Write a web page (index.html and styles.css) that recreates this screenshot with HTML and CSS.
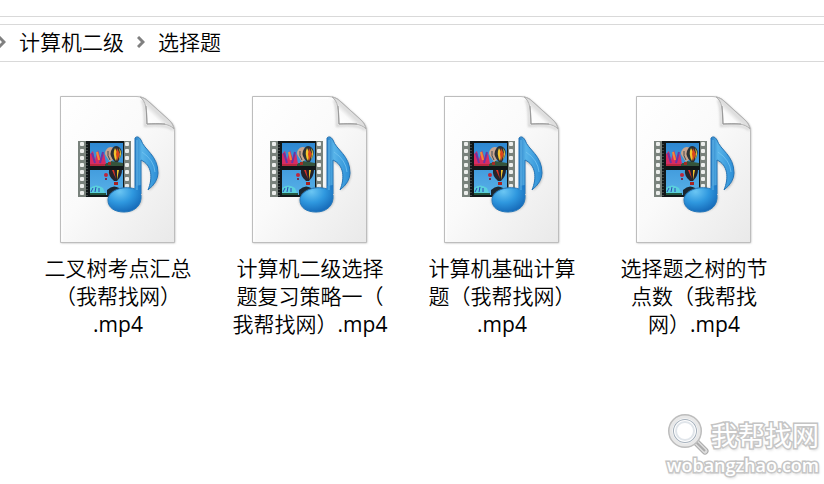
FILE: index.html
```html
<!DOCTYPE html>
<html lang="zh-CN">
<head>
<meta charset="utf-8">
<title>选择题</title>
<link rel="stylesheet" href="styles.css">
</head>
<body>
<svg class="defs" aria-hidden="true">
  <defs>
    <linearGradient id="paper" x1="0" y1="0" x2="1" y2="1">
      <stop offset="0" stop-color="#fff"/><stop offset=".45" stop-color="#fafafa"/><stop offset="1" stop-color="#e9e9e9"/>
    </linearGradient>
    <linearGradient id="curl" x1="0" y1="1" x2=".5" y2=".5">
      <stop offset="0" stop-color="#c4c4c4"/><stop offset=".4" stop-color="#fff"/><stop offset=".8" stop-color="#fafafa"/><stop offset="1" stop-color="#dedede"/>
    </linearGradient>
    <linearGradient id="sky" x1="0" y1="0" x2="0" y2="1">
      <stop offset="0" stop-color="#2d87d2"/><stop offset="1" stop-color="#58b1e8"/>
    </linearGradient>
    <linearGradient id="blue" x1="0" y1="0" x2="1" y2="0">
      <stop offset="0" stop-color="#2a7fc6"/><stop offset=".3" stop-color="#58b4e9"/><stop offset="1" stop-color="#2c8ed6"/>
    </linearGradient>
    <radialGradient id="head" cx=".35" cy=".25" r=".8">
      <stop offset="0" stop-color="#6bc6f3"/><stop offset=".5" stop-color="#2f98df"/><stop offset="1" stop-color="#1467b6"/>
    </radialGradient>
    <pattern id="holes" width="8" height="7" patternUnits="userSpaceOnUse" patternTransform="translate(20 47)">
      <rect width="8" height="7" fill="#79827c"/><rect x="2" y="1" width="4" height="4" rx="1" fill="#eceeec"/>
    </pattern>
    <filter id="soft" x="-20%" y="-20%" width="140%" height="140%"><feGaussianBlur stdDeviation="1"/></filter>
    <symbol id="video" viewBox="0 0 120 152">
      <path d="M3 3H82Q87 4 91 8L113 28Q117 32 117 38V149H3Z" fill="#777" opacity=".6" filter="url(#soft)"/>
      <path d="M2.500 2.500H79C84 3 87 4 90 7L112 27C115 30 116.500 33 116.500 38V148.500H2.500Z" fill="url(#paper)" stroke="#bdbdbd"/>
      <path d="M4 147V4H78" fill="none" stroke="#fff"/>
      <path d="M84 6C87 11 87 20 87 32C98 31 110 31 115 36" fill="none" stroke="#aaa" stroke-width="2" opacity=".5" filter="url(#soft)"/>
      <path d="M82 3C88 7 89 16 89 30C100 29 111 29 116 35C115 31 114 29 111 26L91 8C88 5 86 4 82 3Z" fill="url(#curl)" stroke="#b0b0b0"/>
      <path d="M88 12L89 30L107 30" fill="none" stroke="#999"/>
      <rect x="20" y="47" width="52" height="56" fill="#79827c"/>
      <rect x="20" y="47" width="8" height="56" fill="url(#holes)"/>
      <rect x="20" y="47" width="8" height="56" fill="url(#holes)" transform="translate(45 0)"/>
      <path d="M28 47H66V103H28Z" fill="#111719"/>
      <path d="M29 50V102" stroke="#737b77" stroke-dasharray="1 2"/>
      <path d="M32 49H65V72H32ZM32 76H65V101H32Z" fill="url(#sky)"/>
      <path d="M32 69Q37 65 43 68T53 67L65 69V72H32Z" fill="#35543c"/>
      <path d="M32 60L35 57L37 66L40 56L43 66L46 59L48 70H32Z" fill="#d92b62"/>
      <path d="M34 59L37 69M45 58L42 69" stroke="#6b35a4" stroke-width="2"/>
      <path d="M39 58L41 66" stroke="#f28b36" stroke-width="2"/>
      <path d="M32 70H47V72H32Z" fill="#b8293f"/>
      <path d="M48 56Q51 51 56 54V65L52 68L48 62Q46 59 48 56Z" fill="#c9a58f"/>
      <path d="M50 57Q49 62 52 66" stroke="#3e4a52" fill="none"/>
      <path d="M53 57Q56 50 61 53Q65 56 63 62L60 68H57Q51 62 53 57Z" fill="#2b3136"/>
      <path d="M57 54Q54 60 58 67L60 60Z" fill="#f4c52d"/>
      <path d="M59 54L62 60L59 67L58 60Z" fill="#d9451c"/>
      <path d="M61 54Q65 59 61 66L62 59Z" fill="#d8c43b"/>
      <path d="M50 68H53V71H50Z" fill="#a32c25"/>
      <circle cx="48" cy="81" r="2" fill="#bd263b"/>
      <path d="M47 84H49V86H47Z" fill="#6e2f54"/>
      <path d="M51 76H64Q64 82 59 87H56Q50 82 51 76Z" fill="#24232c"/>
      <path d="M54 76H56L58 85Z" fill="#db3327"/><path d="M59 76H61L59 86Z" fill="#ebc12c"/>
      <path d="M56 88H60V91H56Z" fill="#a9221f"/>
      <path d="M32 94Q38 89 45 94L47 99H32Z" fill="#5ad0dd"/>
      <path d="M33 98L35 94M37 98L38 93M41 98L41 94" stroke="#2c49b6" fill="none"/>
      <path d="M32 99H48V101H32Z" fill="#23563f"/>
      <path d="M49 101V96Q55 90 61 94L65 101Z" fill="#192630"/>
      <path d="M78 43Q82 42 84 48C88 57 101 63 101 80Q101 89 91 97C96 85 94 72 83 68L84 101C86 111 78 118 67 118C56 118 49 113 49 106C50 96 66 91 77 95Z" fill="#555" opacity=".35" filter="url(#soft)"/>
      <path d="M77 44Q80 41 83 46C86 56 100 61 100 79Q100 88 90 96C95 84 94 71 83 66L83 100L77 103Z" fill="url(#blue)" stroke="#2475b7"/>
      <path d="M77 92V95C64 91 50 97 50 106C50 114 57 118 66 118C77 118 84 111 83 101V91Z" fill="url(#head)"/>
      <path d="M77 95C64 91 50 97 50 106C50 114 57 118 66 118C77 118 84 111 83 101" fill="none" stroke="#2378bc"/>
      <path d="M79 46V96M84 58Q96 66 97 78" fill="none" stroke="#79c8f2" opacity=".7"/>
    </symbol>
  </defs>
</svg>
<header class="topbar"></header>
<nav class="crumbs" aria-label="路径">
  <svg class="chevron" viewBox="0 0 8 12" aria-hidden="true"><path d="M1 1L6 6L1 11"/></svg>
  <a href="#">计算机二级</a>
  <svg class="chevron" viewBox="0 0 8 12" aria-hidden="true"><path d="M1 1L6 6L1 11"/></svg>
  <a href="#">选择题</a>
</nav>
<main class="files">
  <figure class="file"><svg class="icon" aria-hidden="true"><use href="#video"/></svg><figcaption>二叉树考点汇总<br>（我帮找网）<br><span class="ext">.mp4</span></figcaption></figure>
  <figure class="file"><svg class="icon" aria-hidden="true"><use href="#video"/></svg><figcaption>计算机二级选择<br>题复习策略一（<br>我帮找网）<span class="ext">.mp4</span></figcaption></figure>
  <figure class="file"><svg class="icon" aria-hidden="true"><use href="#video"/></svg><figcaption>计算机基础计算<br>题（我帮找网）<br><span class="ext">.mp4</span></figcaption></figure>
  <figure class="file"><svg class="icon" aria-hidden="true"><use href="#video"/></svg><figcaption>选择题之树的节<br>点数（我帮找<br>网）<span class="ext">.mp4</span></figcaption></figure>
</main>
<aside class="watermark">
  <div class="brand">
    <svg class="lens" viewBox="0 0 42 42" aria-hidden="true">
      <path d="M29 29L38 38" stroke="#aaa" stroke-width="7" stroke-linecap="round"/>
      <path d="M29 29L38 38" stroke="#ddd" stroke-width="5" stroke-linecap="round"/>
      <path d="M29 29L38 38" stroke="#aaa" stroke-width="2"/>
      <circle cx="18" cy="18" r="15" fill="#fff" stroke="#bdbdbd" stroke-width="4"/>
      <circle cx="18" cy="18" r="14" fill="none" stroke="#e8e8e8" stroke-width="3"/>
      <circle cx="18" cy="18" r="11" fill="#fff" stroke="#a5b0bb" stroke-width="2"/>
      <circle cx="18" cy="18" r="9" fill="none" stroke="#e0e5ea" stroke-width="2"/>
    </svg>
    <span class="name">我帮找网</span>
  </div>
  <div class="site">wobangzhao.com</div>
</aside>
</body>
</html>
```
FILE: styles.css
```css
* {
  box-sizing: border-box;
}

body {
  position: relative;
  min-height: 100vh;
  margin: 0;
  background: #fff;
  color: #000;
  font-family: "Open Sans", "Noto Sans CJK SC", sans-serif;
  font-size: 21px;
  line-height: 28px;
}

.defs {
  position: absolute;
  width: 0;
  height: 0;
}

.topbar {
  height: 17px;
  border-bottom: 1px solid #d9d9d9;
}

.crumbs {
  display: flex;
  align-items: center;
  gap: 13px;
  height: 38px;
  margin-top: 7px;
  padding-bottom: 2px;
  border: solid #d9d9d9;
  border-width: 1px 0;
  font-weight: 350;
}

.crumbs a {
  color: inherit;
  text-decoration: none;
}

.chevron {
  width: 8px;
  height: 12px;
  fill: none;
  stroke: #808080;
  stroke-width: 3;
}

.chevron:first-child {
  margin-left: -2px;
}

.files {
  display: grid;
  grid-template-columns: repeat(auto-fill, 192px);
  padding: 32px 22px;
}

.file {
  display: flex;
  flex-direction: column;
  align-items: center;
  gap: 8px;
  margin: 0;
}

.icon {
  width: 120px;
  height: 152px;
}

figcaption {
  font-weight: 350;
  text-align: center;
  white-space: nowrap;
}

.ext {
  font-weight: 400;
}

.watermark {
  position: absolute;
  right: 5px;
  bottom: 8px;
  color: #fff;
  text-shadow: 1px 2px 3px #ccc;
  -webkit-text-stroke: 3px #c4c4c4;
  paint-order: stroke fill;
}

.brand {
  display: flex;
  align-items: center;
  justify-content: flex-end;
  gap: 2px;
  height: 40px;
}

.lens {
  width: 42px;
  height: 42px;
}

.name {
  padding-top: 4px;
  font-size: 27px;
  font-weight: 400;
}

.site {
  font-size: 18px;
  font-weight: 600;
  line-height: 22px;
}
```
